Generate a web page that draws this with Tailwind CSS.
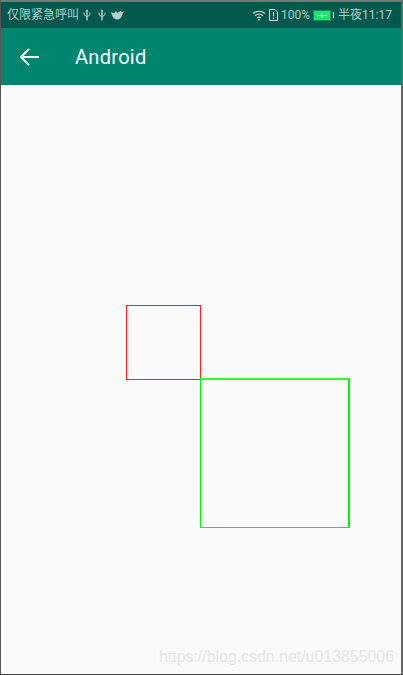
<!DOCTYPE html>
<html lang="en">
<head>
  <meta charset="UTF-8" />
  <title>Android</title>
  <script src="https://cdn.jsdelivr.net/npm/@tailwindcss/browser@4"></script>
</head>
<body class="bg-[#fafafa] font-['Roboto','Noto_Sans_CJK_SC',sans-serif]">
  <div class="relative w-[403px] h-[675px] overflow-hidden flex flex-col border-l border-r-2 border-t-2 border-b border-l-[#555] border-r-[#666] border-t-[#777] border-b-[#444] bg-[#fafafa]">

    <!-- Status bar -->
    <div class="h-[26px] shrink-0 bg-[#00594c] flex items-center justify-between pl-[6px] pr-[9px] text-[12px] text-[#b5cfc9]">
      <div class="flex items-center">
        <span>仅限紧急呼叫</span>
        <svg class="ml-[4px]" width="8" height="12" viewBox="0 0 8 12" fill="none" stroke="#b5cfc9" stroke-width="1"><path d="M4 2V11.5" stroke-width="1.4"/><path d="M1 3.5V5.5L4 8L7 5.5V3.5"/><path d="M4 0L5.5 2.5H2.5Z" fill="#b5cfc9" stroke="none"/></svg>
        <svg class="ml-[7px]" width="8" height="12" viewBox="0 0 8 12" fill="none" stroke="#b5cfc9" stroke-width="1"><path d="M4 2V11.5" stroke-width="1.4"/><path d="M1 3.5V5.5L4 8L7 5.5V3.5"/><path d="M4 0L5.5 2.5H2.5Z" fill="#b5cfc9" stroke="none"/></svg>
        <svg class="ml-[5px]" width="13" height="10" viewBox="0 0 13 10" fill="#b5cfc9"><path d="M0 2L3 3.2L5 1L6.5 3L10 0.5L10.5 2L13 1.5L11.5 4C11 7.5 9 9.5 6 9.5C3 9.5 1 6.5 0 2Z"/></svg>
      </div>
      <div class="flex items-center">
        <svg width="14" height="11" viewBox="0 0 14 11" fill="none" stroke="#c5dbd6" stroke-width="1.2"><path d="M1 3.5C4.5 0.5 9.5 0.5 13 3.5M3 5.7C5.5 3.7 8.5 3.7 11 5.7M5 7.8C6.2 6.9 7.8 6.9 9 7.8"/><circle cx="7" cy="9.6" r="0.9" fill="#c5dbd6" stroke="none"/></svg>
        <svg class="ml-[3px]" width="9" height="12" viewBox="0 0 9 12" fill="none" stroke="#c5dbd6" stroke-width="1"><path d="M0.5 0.5H6L8.5 3V11.5H0.5Z"/><path d="M4.5 3V7.5M4.5 8.5V10"/></svg>
        <span class="ml-[3px]">100%</span>
        <div class="ml-[3px] flex items-center">
          <div class="w-[18px] h-[11px] bg-[#1ee36e] border border-[#0c8f5a] flex items-center justify-center">
            <svg width="10" height="5" viewBox="0 0 10 5" fill="#e8fff0"><path d="M0 2H4V0L5.5 2H10V3H5.5V5L4 3H0Z"/></svg>
          </div>
          <div class="ml-[2px] w-[1px] h-[6px] bg-[#c5dbd6]"></div>
        </div>
        <span class="ml-[4px]">半夜11:17</span>
      </div>
    </div>

    <!-- App bar -->
    <div class="h-[57px] shrink-0 bg-[#00866f] flex items-center pl-[18px] text-white">
      <svg width="20" height="18" viewBox="0 0 20 18" fill="none" stroke="white" stroke-width="2"><path d="M20 9H2M10 1L2 9L10 17"/></svg>
      <span class="ml-[36px] text-[20px] font-normal tracking-[0.3px] leading-none">Android</span>
    </div>

    <!-- Canvas rectangles -->
    <div class="absolute left-[125px] top-[303px] w-[75px] h-[75px] border border-[#ff2020]"></div>
    <div class="absolute left-[199px] top-[376px] w-[150px] h-[150px] border-l border-t-2 border-b border-r-2 border-[#00ff00] border-t-[#30ff30]"></div>

    <!-- Watermark -->
    <div class="absolute right-[7px] bottom-[9px] text-[15.9px] leading-none text-[#e6e6e6] font-['Liberation_Sans',sans-serif]">https://blog.csdn.net/u013855006</div>
  </div>
</body>
</html>
